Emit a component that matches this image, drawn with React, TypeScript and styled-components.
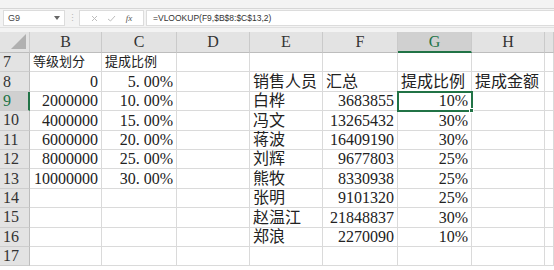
import React from "react";
import styled, { createGlobalStyle, css } from "styled-components";

const Global = createGlobalStyle`
  html, body { margin: 0; padding: 0; background: #fff; overflow: hidden; }
  #root { width: 554px; height: 270px; overflow: hidden; }
`;

const Page = styled.div`
  width: 554px;
  height: 270px;
  display: flex;
  flex-direction: column;
  background: #fff;
  overflow: hidden;
`;

const RibbonEdge = styled.div`
  height: 8px;
  background: #f3f3f3;
  border-bottom: 1px solid #d6d6d6;
  flex: none;
`;

const FormulaBar = styled.div`
  height: 16px;
  flex: none;
  display: flex;
  align-items: stretch;
  background: #f3f3f3;
  padding: 1px 0 1px 3px;
  border-bottom: 1px solid #e0e0e0;
  box-sizing: content-box;
`;

const NameBox = styled.div`
  width: 62px;
  background: #fff;
  border: 1px solid #dcdcdc;
  box-sizing: border-box;
  display: flex;
  align-items: center;
  justify-content: space-between;
  padding: 0 4px;
  font-family: "Liberation Sans", Arial, sans-serif;
  font-size: 9px;
  color: #444;
`;

const Grip = styled.div`
  width: 14px;
  display: flex;
  align-items: center;
  justify-content: center;
  color: #b8b8b8;
  font-size: 9px;
  font-family: "Liberation Sans", sans-serif;
`;

const IconBox = styled.div`
  width: 65px;
  background: #fff;
  border: 1px solid #dcdcdc;
  box-sizing: border-box;
  display: flex;
  align-items: center;
  justify-content: space-around;
  padding: 0 6px;
`;

const FxText = styled.span`
  font-family: "Liberation Serif", serif;
  font-style: italic;
  font-size: 9px;
  color: #555;
`;

const FormulaInput = styled.div`
  flex: 1;
  margin-left: 2px;
  background: #fff;
  border: 1px solid #dcdcdc;
  border-right: none;
  box-sizing: border-box;
  display: flex;
  align-items: center;
  padding-left: 6px;
  font-family: "Liberation Sans", Arial, sans-serif;
  font-size: 8.5px;
  color: #333;
`;

const Spacer = styled.div`
  height: 4px;
  flex: none;
  background: #f3f3f3;
`;

const Sheet = styled.div`
  flex: 1;
  display: grid;
  grid-template-columns: 30px 72px 75px 73px 73px 75px 74px 73px 1fr;
  grid-template-rows: 21px repeat(11, 19.4px);
  font-family: "Liberation Serif", "Noto Sans CJK SC", serif;
  color: #222;
`;

const ColHead = styled.div<{ $sel?: boolean }>`
  background: ${(p) => (p.$sel ? "#d0d0d0" : "#e3e3e3")};
  border-right: 1px solid #cacaca;
  border-bottom: ${(p) => (p.$sel ? "2px solid #217346" : "1px solid #bdbdbd")};
  box-sizing: border-box;
  display: flex;
  align-items: center;
  justify-content: center;
  font-size: 16px;
  color: ${(p) => (p.$sel ? "#217346" : "#333")};
`;

const Corner = styled.div`
  background-color: #e3e3e3;
  border-right: 1px solid #cacaca;
  border-bottom: 1px solid #bdbdbd;
  box-sizing: border-box;
  display: flex;
  align-items: flex-end;
  justify-content: flex-end;
  padding: 0 3px 3px 0;
`;

const CornerTri = styled.div`
  width: 0;
  height: 0;
  border-style: solid;
  border-width: 0 0 15px 15px;
  border-color: transparent transparent #b0b0b0 transparent;
`;

const RowHead = styled.div<{ $sel?: boolean }>`
  background: ${(p) => (p.$sel ? "#d0d0d0" : "#e3e3e3")};
  border-right: ${(p) => (p.$sel ? "2px solid #217346" : "1px solid #bdbdbd")};
  border-bottom: 1px solid #cdcdcd;
  box-sizing: border-box;
  display: flex;
  align-items: center;
  padding-left: 3px;
  font-size: 16px;
  color: ${(p) => (p.$sel ? "#217346" : "#333")};
`;

const Cell = styled.div<{ $align?: "left" | "right"; $small?: boolean; $active?: boolean }>`
  border-right: 1px solid #dadada;
  border-bottom: 1px solid #dadada;
  box-sizing: border-box;
  display: flex;
  align-items: flex-end;
  justify-content: ${(p) => (p.$align === "right" ? "flex-end" : "flex-start")};
  padding: 0 3px;
  font-size: ${(p) => (p.$small ? "13px" : "16px")};
  line-height: 18px;
  white-space: nowrap;
  position: relative;
  ${(p) =>
    p.$active &&
    css`
      outline: 2px solid #217346;
      outline-offset: -1px;
      z-index: 1;
    `}
`;

const FillHandle = styled.span`
  position: absolute;
  right: -3px;
  bottom: -3px;
  width: 5px;
  height: 5px;
  background: #217346;
  border: 1px solid #fff;
  box-sizing: border-box;
`;

const Dot = styled.span`
  margin-right: 4px;
`;

const cols = ["B", "C", "D", "E", "F", "G", "H", ""];

type Row = { n: number; cells: (string | null)[] };

const rows: Row[] = [
  { n: 7, cells: ["等级划分", "提成比例", null, null, null, null, null, null] },
  { n: 8, cells: ["0", "5.00%", null, "销售人员", "汇总", "提成比例", "提成金额", null] },
  { n: 9, cells: ["2000000", "10.00%", null, "白桦", "3683855", "10%", null, null] },
  { n: 10, cells: ["4000000", "15.00%", null, "冯文", "13265432", "30%", null, null] },
  { n: 11, cells: ["6000000", "20.00%", null, "蒋波", "16409190", "30%", null, null] },
  { n: 12, cells: ["8000000", "25.00%", null, "刘辉", "9677803", "25%", null, null] },
  { n: 13, cells: ["10000000", "30.00%", null, "熊牧", "8330938", "25%", null, null] },
  { n: 14, cells: [null, null, null, "张明", "9101320", "25%", null, null] },
  { n: 15, cells: [null, null, null, "赵温江", "21848837", "30%", null, null] },
  { n: 16, cells: [null, null, null, "郑浪", "2270090", "10%", null, null] },
  { n: 17, cells: [null, null, null, null, null, null, null, null] },
];

const isNum = (s: string) => /^[\d.]+%?$/.test(s);

const renderText = (s: string, ci: number) => {
  if (ci === 1 && s.includes(".")) {
    const [a, b] = s.split(".");
    return (
      <>
        {a}
        <Dot>.</Dot>
        {b}
      </>
    );
  }
  return s;
};

export default function App() {
  return (
    <Page>
      <Global />
      <RibbonEdge />
      <FormulaBar>
        <NameBox>
          <span>G9</span>
          <svg width="6" height="4" viewBox="0 0 6 4">
            <path d="M0 0 L6 0 L3 4 Z" fill="#666" />
          </svg>
        </NameBox>
        <Grip>⋮</Grip>
        <IconBox>
          <svg width="7" height="7" viewBox="0 0 7 7">
            <path d="M1 1 L6 6 M6 1 L1 6" stroke="#bdbdbd" strokeWidth="1" />
          </svg>
          <svg width="9" height="7" viewBox="0 0 9 7">
            <path d="M1 4 L3.5 6 L8 1" stroke="#bdbdbd" strokeWidth="1" fill="none" />
          </svg>
          <FxText>fx</FxText>
        </IconBox>
        <FormulaInput>=VLOOKUP(F9,$B$8:$C$13,2)</FormulaInput>
      </FormulaBar>
      <Spacer />
      <Sheet>
        <Corner>
          <CornerTri />
        </Corner>
        {cols.map((c, i) => (
          <ColHead key={i} $sel={c === "G"}>
            {c}
          </ColHead>
        ))}
        {rows.map((r) => (
          <React.Fragment key={r.n}>
            <RowHead $sel={r.n === 9}>{r.n}</RowHead>
            {r.cells.map((v, ci) => {
              const active = r.n === 9 && ci === 5;
              return (
                <Cell
                  key={ci}
                  $align={v && isNum(v) ? "right" : "left"}
                  $small={r.n === 7}
                  $active={active}
                >
                  {v ? renderText(v, ci) : null}
                  {active && <FillHandle />}
                </Cell>
              );
            })}
          </React.Fragment>
        ))}
      </Sheet>
    </Page>
  );
}
